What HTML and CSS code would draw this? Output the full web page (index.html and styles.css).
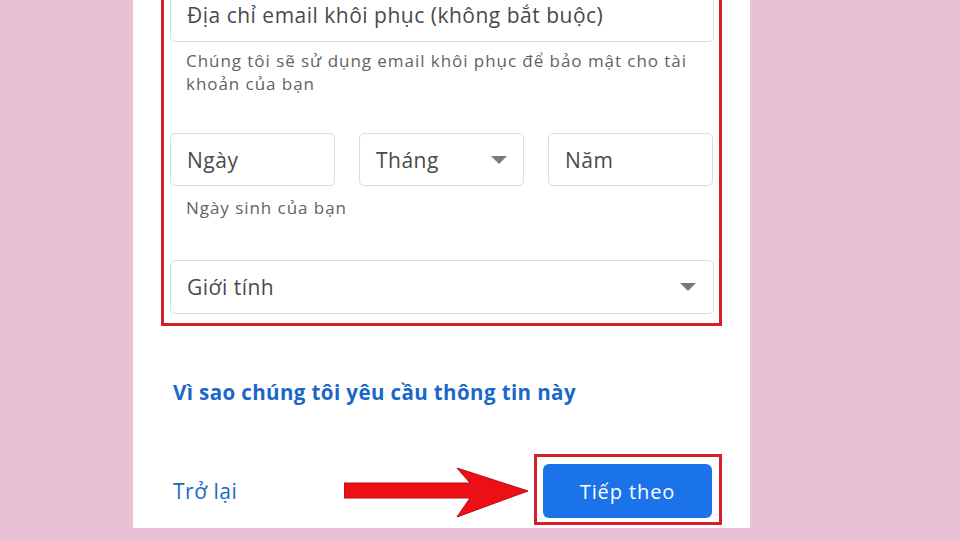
FILE: index.html
```html
<!DOCTYPE html>
<html lang="vi">
<head>
<meta charset="UTF-8" />
<meta name="viewport" content="width=device-width, initial-scale=1" />
<title>Tạo Tài khoản Google</title>
<link rel="stylesheet" href="styles.css">
</head>
<body>

<div class="panel">
  <!-- vùng được khoanh đỏ -->
  <div class="mark-box">
    <div class="field">Địa chỉ email khôi phục (không bắt buộc)</div>
    <p class="hint">Chúng tôi sẽ sử dụng email khôi phục để bảo mật cho tài<br>khoản của bạn</p>

    <div class="date-row">
      <div class="field small">Ngày</div>
      <div class="field small select">Tháng <span class="caret"></span></div>
      <div class="field small">Năm</div>
    </div>
    <p class="hint dob">Ngày sinh của bạn</p>

    <div class="field select gender">Giới tính <span class="caret"></span></div>
  </div>

  <a class="why" href="#">Vì sao chúng tôi yêu cầu thông tin này</a>

  <div class="footer">
    <a class="back" href="#">Trở lại</a>

    <svg class="arrow" width="186" height="52" viewBox="0 0 186 52">
      <polygon points="0,16 126,16 113,1 184,24 113,50 126,31 0,31" fill="#ec0f16" stroke="#b30d12" stroke-width="1"/>
    </svg>

    <div class="btn-mark">
      <button class="next">Tiếp theo</button>
    </div>
  </div>
</div>

</body>
</html>
```

FILE: styles.css
```css
body, html {
  margin: 0; padding: 0;
  height: 100%;
  overflow: hidden;
  background-color: #eac0d4;
  font-family: 'Open Sans', 'Noto Sans', sans-serif;
}

/* khung trắng */
.panel {
  margin-left: 133px;
  width: 561px;
  height: 528px;
  padding: 0 28px;
  background: #fff;
  overflow: hidden;
}

.mark-box {
  margin-top: -21px;
  border: 3px solid #d41e2a;
  padding: 6px 5px 9px 6px;
}

.field {
  box-sizing: border-box;
  height: 54px;
  padding: 0 16px;
  border: 1px solid #dadce0;
  border-radius: 5px;
  display: flex;
  align-items: center;
  font-size: 21px;
  letter-spacing: 0.5px;
  color: #4a4a4a;
}

.hint {
  margin: 7px 0 0 16px;
  font-size: 17px;
  letter-spacing: 0.95px;
  line-height: 23px;
  color: #5f6368;
}
.hint.dob {
  margin-top: 10px;
}

.date-row {
  margin-top: 38px;
  display: grid;
  grid-template-columns: 165px 165px 165px;
  gap: 24px;
}
.field.small {
  height: 53px;
}

.select {
  justify-content: space-between;
}
.caret {
  width: 0; height: 0;
  border-left: 8px solid transparent;
  border-right: 8px solid transparent;
  border-top: 8px solid #7a7a7a;
}
.gender {
  margin-top: 41px;
  padding-right: 17px;
}

.why {
  display: block;
  margin: 52px 0 0 12px;
  font-size: 20.5px;
  letter-spacing: 0.4px;
  line-height: 28px;
  font-weight: bold;
  color: #1a67c8;
  text-decoration: none;
}

.footer {
  position: relative;
  margin-top: 48px;
  display: flex;
  align-items: center;
  justify-content: space-between;
}
.back {
  margin-left: 12px;
  margin-top: 3px;
  font-size: 21px;
  letter-spacing: 0.5px;
  font-weight: 500;
  color: #1a67c8;
  text-decoration: none;
}
.arrow {
  position: absolute;
  left: 183px;
  top: 13px;
}

.btn-mark {
  border: 3px solid #d41e2a;
  padding: 7px 7px 4px 6px;
}
.next {
  display: block;
  width: 169px;
  height: 54px;
  border: none;
  border-radius: 6px;
  background: #1a73e8;
  color: #fff;
  font-family: 'Open Sans', 'Noto Sans', sans-serif;
  font-size: 20px;
  letter-spacing: 0.9px;
  font-weight: 500;
}
```
